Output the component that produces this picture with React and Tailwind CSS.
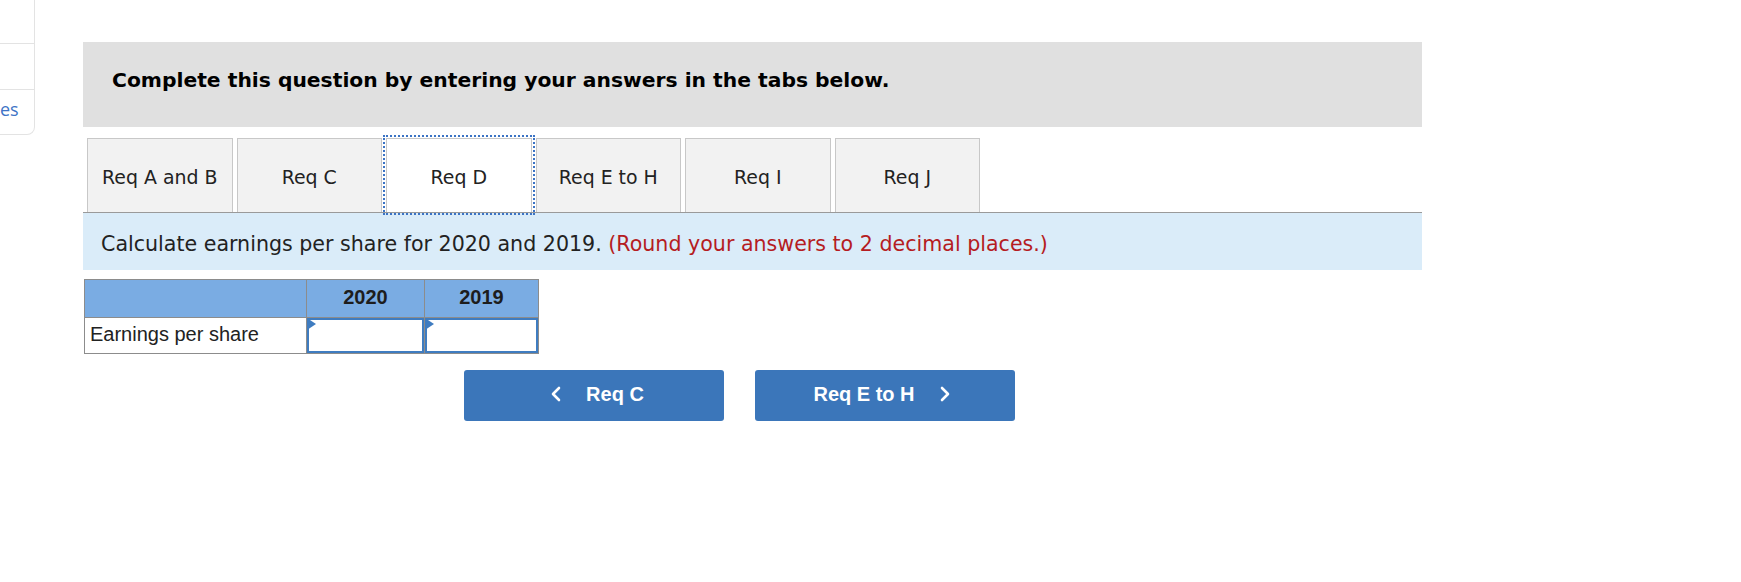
import { ChevronLeft, ChevronRight } from "lucide-react";

const verdana = { fontFamily: '"DejaVu Sans", Verdana, sans-serif' };
const arial = { fontFamily: '"Liberation Sans", Arial, sans-serif' };

const tabs = [
  { label: "Req A and B" },
  { label: "Req C" },
  { label: "Req D", active: true },
  { label: "Req E to H" },
  { label: "Req I" },
  { label: "Req J" },
];

const Tab = ({ label, active }) => {
  if (active) {
    return (
      <div className="w-[145.5px] h-[74px] outline-2 outline-dotted outline-[#3b73c4] outline-offset-[1px]">
        <div className="h-full bg-white border border-b-0 border-[#c8c8c8] flex items-center justify-center pt-[4px] text-[18.9px] text-[#222]">
          {label}
        </div>
      </div>
    );
  }
  return (
    <div className="w-[145.5px] h-[74px] bg-[#f2f2f2] border border-b-0 border-[#c8c8c8] flex items-center justify-center pt-[4px] text-[18.9px] text-[#222]">
      {label}
    </div>
  );
};

const InputCell = ({ width }) => {
  return (
    <td className={"relative p-0 border border-[#8c8c8c] " + width}>
      <div className="relative h-[35px] bg-white border-2 border-[#3f7cc0]">
        <span className="absolute -left-[2px] -top-[2px] w-0 h-0 border-y-[6px] border-y-transparent border-l-[9px] border-l-[#3f7cc0]"></span>
      </div>
    </td>
  );
};

export default function App() {
  return (
    <div className="relative w-[1741px] h-[582px] bg-white overflow-hidden">
      {/* side panel edge */}
      <div className="absolute left-0 -top-[10px] w-[35px] h-[145px] border border-l-0 border-[#e3e3e3] rounded-br-[8px] flex flex-col">
        <div className="h-[53px] border-b border-[#e3e3e3]"></div>
        <div className="h-[46px] border-b border-[#e3e3e3]"></div>
        <div className="flex-1 overflow-hidden">
          <div className="text-[18px] leading-[22px] pt-[8px] text-[#3f74c6]" style={{ fontFamily: '"Open Sans", sans-serif' }}>
            es
          </div>
        </div>
      </div>

      <div className="ml-[83px] pt-[42px] w-[1339px]" style={verdana}>
        <div className="h-[85px] bg-[#e0e0e0] pl-[29px] pt-[26px]">
          <div className="text-[20.3px] leading-[24px] font-bold text-black">
            Complete this question by entering your answers in the tabs below.
          </div>
        </div>

        <div className="mt-[11px] flex gap-[4px] pl-[4px] border-b border-[#9a9a9a]">
          {tabs.map((t) => (
            <Tab key={t.label} label={t.label} active={t.active} />
          ))}
        </div>

        <div className="h-[57px] bg-[#daecf9] pl-[18px] pt-[19px] text-[20.6px] leading-[24px] text-[#222]">
          Calculate earnings per share for 2020 and 2019.{" "}
          <span className="text-[#b51c22]">(Round your answers to 2 decimal places.)</span>
        </div>

        <table className="mt-[9px] ml-[1px] border-collapse border border-[#8c8c8c]" style={arial}>
          <thead>
            <tr className="h-[38px] bg-[#7aace3]">
              <th className="w-[222px] border border-[#8c8c8c]"></th>
              <th className="w-[118px] border border-[#8c8c8c] pb-[3px] text-[20px] font-bold text-[#1d1d1d]">2020</th>
              <th className="w-[114px] border border-[#8c8c8c] pb-[3px] text-[20px] font-bold text-[#1d1d1d]">2019</th>
            </tr>
          </thead>
          <tbody>
            <tr className="h-[36px]">
              <td className="border border-[#8c8c8c] pl-[5px] pb-[3px] text-[20px] text-[#222] text-left">Earnings per share</td>
              <InputCell width="w-[118px]" />
              <InputCell width="w-[114px]" />
            </tr>
          </tbody>
        </table>

        <div className="mt-[16px] ml-[381px] flex gap-[31px]" style={arial}>
          <button className="w-[260px] h-[51px] rounded-[3px] bg-[#3b76ba] text-white text-[20px] font-bold flex items-center justify-center gap-[18px] pb-[4px]">
            <ChevronLeft size={24} strokeWidth={2.6} />
            <span>Req C</span>
          </button>
          <button className="w-[260px] h-[51px] rounded-[3px] bg-[#3b76ba] text-white text-[20px] font-bold flex items-center justify-center gap-[18px] pb-[4px]">
            <span>Req E to H</span>
            <ChevronRight size={24} strokeWidth={2.6} />
          </button>
        </div>
      </div>
    </div>
  );
}
